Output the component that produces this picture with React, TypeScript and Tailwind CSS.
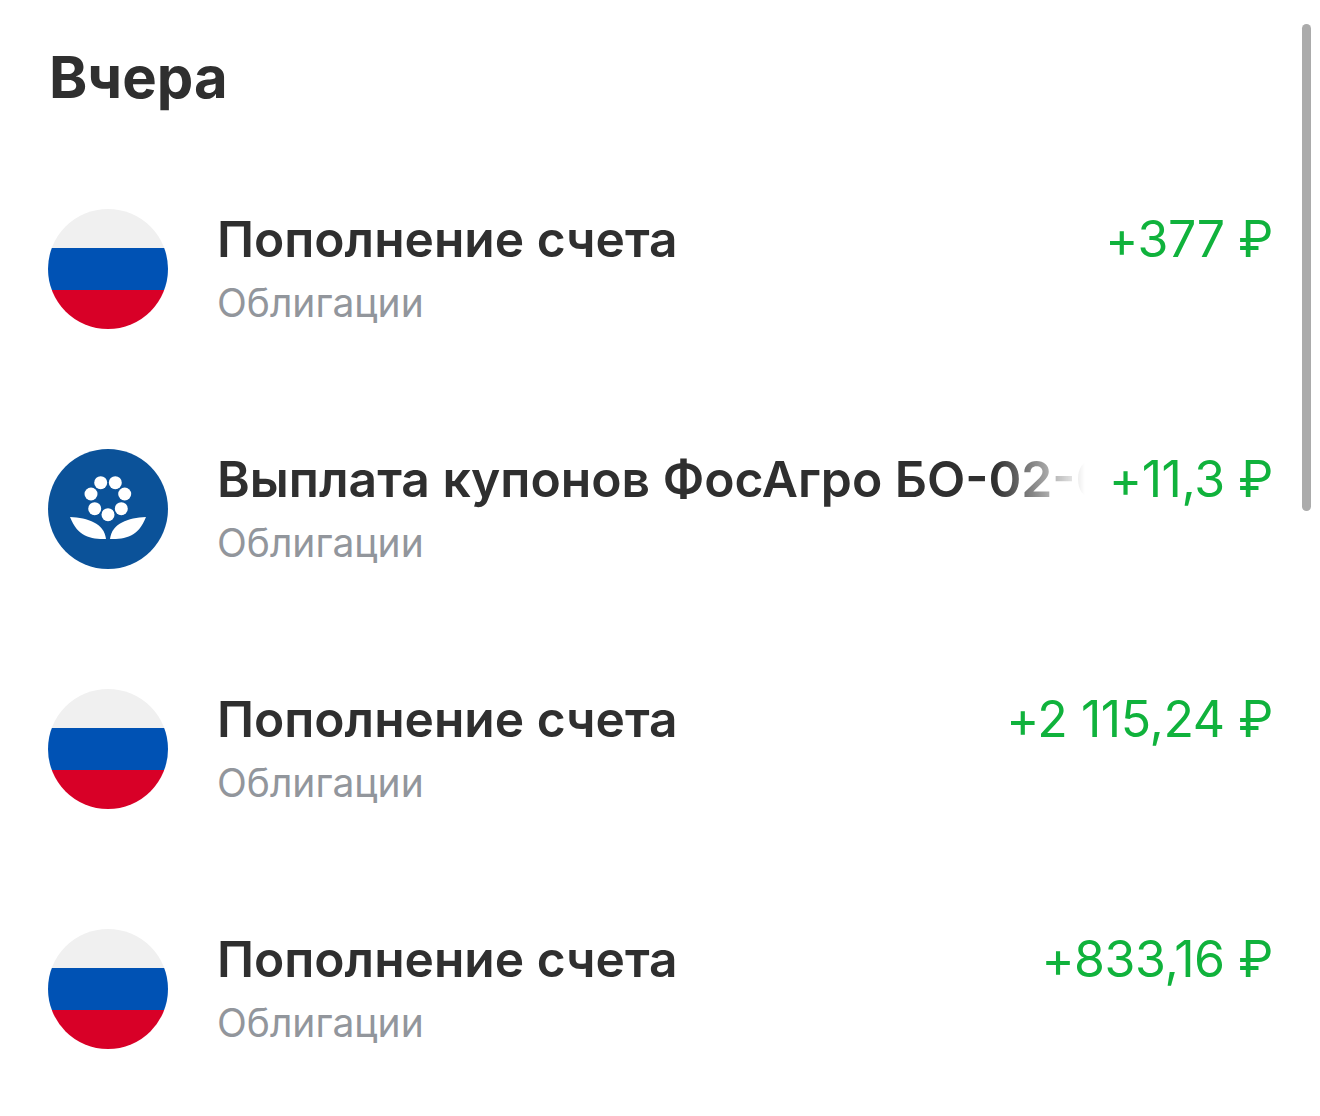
type Operation = {
  title: string;
  amount: string;
  icon: "flag" | "phosagro";
};

const operations: Operation[] = [
  { title: "Пополнение счета", amount: "+377 ₽", icon: "flag" },
  { title: "Выплата купонов ФосАгро БО-02-03", amount: "+11,3 ₽", icon: "phosagro" },
  { title: "Пополнение счета", amount: "+2 115,24 ₽", icon: "flag" },
  { title: "Пополнение счета", amount: "+833,16 ₽", icon: "flag" },
];

function FlagIcon() {
  return (
    <div className="w-[120px] h-[120px] rounded-full overflow-hidden flex flex-col shrink-0">
      <div className="h-[39px] bg-[#f0f0f0]" />
      <div className="h-[42px] bg-[#0052b4]" />
      <div className="h-[39px] bg-[#d80027]" />
    </div>
  );
}

function PhosagroIcon() {
  return (
    <svg width="120" height="120" viewBox="0 0 120 120" className="shrink-0">
      <circle cx="60" cy="60" r="60" fill="#0b5299" />
      <g fill="#fff">
        <circle cx="52.7" cy="33.7" r="6.5" />
        <circle cx="67.3" cy="33.7" r="6.5" />
        <circle cx="43" cy="45" r="6.5" />
        <circle cx="76.7" cy="45" r="6.5" />
        <circle cx="46.7" cy="59.7" r="6.5" />
        <circle cx="73.3" cy="59.7" r="6.5" />
        <circle cx="60" cy="65.7" r="6.5" />
        <path d="M22 68 C40 69 56 74 58 90 C42 90 30 88 22 68 Z" />
        <path d="M98 68 C80 69 64 74 62 90 C78 90 90 88 98 68 Z" />
      </g>
    </svg>
  );
}

export default function App() {
  return (
    <div className="relative w-[1320px] h-[1116px] bg-white overflow-hidden font-['Inter',sans-serif]">
      <h1 className="pl-[49px] pt-[43px] h-[149px] text-[58px] leading-[68px] font-bold text-[#2f2f2f]">
        Вчера
      </h1>
      <div className="flex flex-col pl-[48px] pr-[47px]">
        {operations.map((op, i) => (
          <div key={i} className="h-[240px] flex flex-row items-center">
            {op.icon === "flag" ? <FlagIcon /> : <PhosagroIcon />}
            <div className="flex-1 min-w-0 ml-[49px] pb-[3px]">
              <div className="flex flex-row justify-between gap-[24px]">
                <p
                  className={
                    op.icon === "phosagro"
                      ? "flex-1 min-w-0 overflow-hidden whitespace-nowrap text-[49.8px] leading-[62px] font-semibold text-[#2f2f2f] [mask-image:linear-gradient(90deg,#000_calc(100%-90px),transparent_100%)]"
                      : "flex-1 min-w-0 whitespace-nowrap text-[49.7px] leading-[62px] font-semibold text-[#2f2f2f]"
                  }
                >
                  {op.title}
                </p>
                <p className="shrink-0 pt-[1px] text-[50px] leading-[61px] tracking-[-0.4px] text-[#10b23c]">
                  {op.amount}
                </p>
              </div>
              <p className="mt-[9px] text-[39px] leading-[48px] text-[#92969c]">Облигации</p>
            </div>
          </div>
        ))}
      </div>
      {/* scrollbar */}
      <div className="absolute left-[1302px] top-[24px] w-[9px] h-[487px] rounded-full bg-[#ababab]" />
    </div>
  );
}
